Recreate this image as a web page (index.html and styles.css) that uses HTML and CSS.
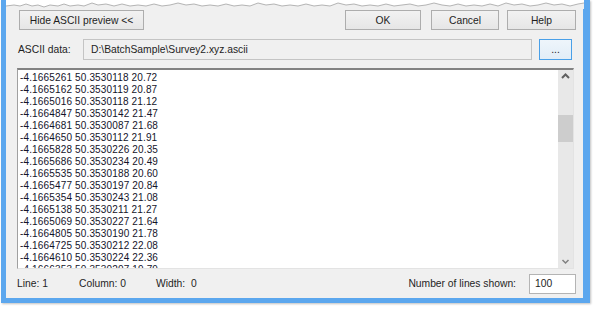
FILE: index.html
```html
<!DOCTYPE html>
<html>
<head>
<meta charset="utf-8">
<link rel="stylesheet" href="styles.css">
</head>
<body>
<div class="window">
  <svg class="tear" width="578" height="9" viewBox="0 0 578 9">
    <path d="M0 6 L8 5 L14 6 L20 4 L26 6 L32 5 L38 7 L44 5 L52 6 L58 4 L64 6 L72 5 L78 6 L86 3 L92 5 L100 4 L108 6 L116 4 L124 6 L132 5 L140 6 L148 4 L156 6 L164 5 L172 3 L180 5 L188 4 L196 6 L204 5 L212 6 L220 4 L228 6 L236 5 L244 6 L252 3 L260 5 L268 4 L276 6 L284 5 L292 6 L300 4 L308 6 L316 5 L324 6 L332 3 L340 5 L348 4 L356 6 L364 5 L372 6 L380 4 L388 6 L396 5 L404 4 L412 6 L420 5 L428 3 L436 5 L444 6 L452 4 L460 6 L468 5 L476 6 L484 4 L492 6 L500 3 L508 5 L516 4 L524 6 L532 5 L540 3 L548 5 L556 4 L564 6 L572 4 L578 3 L578 9 L0 9 Z" fill="#f0f0f0" stroke="none"/>
    <path d="M0 6 L8 5 L14 6 L20 4 L26 6 L32 5 L38 7 L44 5 L52 6 L58 4 L64 6 L72 5 L78 6 L86 3 L92 5 L100 4 L108 6 L116 4 L124 6 L132 5 L140 6 L148 4 L156 6 L164 5 L172 3 L180 5 L188 4 L196 6 L204 5 L212 6 L220 4 L228 6 L236 5 L244 6 L252 3 L260 5 L268 4 L276 6 L284 5 L292 6 L300 4 L308 6 L316 5 L324 6 L332 3 L340 5 L348 4 L356 6 L364 5 L372 6 L380 4 L388 6 L396 5 L404 4 L412 6 L420 5 L428 3 L436 5 L444 6 L452 4 L460 6 L468 5 L476 6 L484 4 L492 6 L500 3 L508 5 L516 4 L524 6 L532 5 L540 3 L548 5 L556 4 L564 6 L572 4 L578 3" fill="none" stroke="#b4b4b4" stroke-width="1"/>
  </svg>
  <div class="content">
    <div class="toprow">
      <button class="btn btn-hide">Hide ASCII preview &lt;&lt;</button>
      <div class="spacer"></div>
      <button class="btn btn-ok">OK</button>
      <button class="btn btn-cancel">Cancel</button>
      <button class="btn btn-help">Help</button>
    </div>
    <div class="datarow">
      <span class="label">ASCII data:</span>
      <div class="field">D:\BatchSample\Survey2.xyz.ascii</div>
      <button class="btn btn-browse">...</button>
    </div>
    <div class="preview">
      <div class="lines">
        <div>-4.1665261 50.3530118 20.72</div>
        <div>-4.1665162 50.3530119 20.87</div>
        <div>-4.1665016 50.3530118 21.12</div>
        <div>-4.1664847 50.3530142 21.47</div>
        <div>-4.1664681 50.3530087 21.68</div>
        <div>-4.1664650 50.3530112 21.91</div>
        <div>-4.1665828 50.3530226 20.35</div>
        <div>-4.1665686 50.3530234 20.49</div>
        <div>-4.1665535 50.3530188 20.60</div>
        <div>-4.1665477 50.3530197 20.84</div>
        <div>-4.1665354 50.3530243 21.08</div>
        <div>-4.1665138 50.3530211 21.27</div>
        <div>-4.1665069 50.3530227 21.64</div>
        <div>-4.1664805 50.3530190 21.78</div>
        <div>-4.1664725 50.3530212 22.08</div>
        <div>-4.1664610 50.3530224 22.36</div>
        <div>-4.1666353 50.3530207 19.79</div>
      </div>
      <div class="scrollbar">
        <svg class="arrow" width="15" height="13" viewBox="0 0 15 13"><path d="M4 8 L7.5 4.5 L11 8" fill="none" stroke="#606060" stroke-width="2"/></svg>
        <div class="track"><div class="thumb"></div></div>
        <svg class="arrow" width="15" height="13" viewBox="0 0 15 13"><path d="M4.5 5 L7.5 8 L10.5 5" fill="none" stroke="#808080" stroke-width="1.5"/></svg>
      </div>
    </div>
    <div class="status">
      <span class="st st-line">Line: 1</span>
      <span class="st st-col">Column: 0</span>
      <span class="st st-width">Width:&nbsp; 0</span>
      <div class="spacer"></div>
      <span class="st">Number of lines shown:</span>
      <div class="numfield">100</div>
    </div>
  </div>
</div>
</body>
</html>
```
FILE: styles.css
```css
html, body {
  margin: 0;
  padding: 0;
  background: #ffffff;
}
body {
  width: 595px;
  height: 312px;
  overflow: hidden;
  font-family: "Liberation Sans", Arial, sans-serif;
  font-size: 10.3px;
  color: #1e1e1e;
}
.window {
  margin-left: 1px;
  width: 577px;
  height: 298px;
  border-left: 5px solid #5ca7ee;
  border-right: 7px solid #5ca7ee;
  border-bottom: 5px solid #5ca7ee;
  background: #f0f0f0;
  display: flex;
  flex-direction: column;
  box-shadow: 1px 1px 2px rgba(0,0,0,0.25);
}
.tear {
  display: block;
  background: #ffffff;
  flex: none;
}
.content {
  padding: 1px 7px 0 11px;
  display: flex;
  flex-direction: column;
}
.toprow {
  display: flex;
  align-items: center;
  height: 20px;
}
.spacer { flex: 1; }
.btn {
  font-family: inherit;
  font-size: 10.3px;
  color: #1e1e1e;
  background: linear-gradient(#f2f2f2, #e6e6e6);
  border: 1px solid #adadad;
  border-radius: 0;
  height: 20px;
  padding: 0;
  margin: 0;
}
.btn-hide { width: 125px; margin-left: 2px; }
.btn-ok { width: 76px; }
.btn-cancel { width: 68px; margin-left: 10px; }
.btn-help { width: 69px; margin-left: 8px; }
.datarow {
  display: flex;
  align-items: center;
  margin-top: 9px;
  height: 21px;
}
.label {
  width: 65px;
  padding-left: 1px;
}
.field {
  width: 440px;
  height: 19px;
  line-height: 19px;
  border: 1px solid #c4c4c4;
  background: #f0f0f0;
  padding-left: 7px;
  box-sizing: content-box;
}
.btn-browse {
  width: 33px;
  height: 21px;
  margin-left: 7px;
  border: 1px solid #4aa0e8;
  background: linear-gradient(#eef5fb, #e2edf7);
  line-height: 14px;
}
.preview {
  margin-top: 8px;
  margin-left: 0;
  width: 557px;
  height: 201px;
  box-sizing: border-box;
  border-top: 2px solid #828282;
  border-left: 1px solid #a0a0a0;
  border-right: 1px solid #e3e3e3;
  border-bottom: 1px solid #e3e3e3;
  background: #ffffff;
  display: flex;
  overflow: hidden;
}
.lines {
  flex: 1;
  padding: 2px 0 0 2px;
  font-size: 10px;
  letter-spacing: 0.15px;
  line-height: 12px;
  color: #14142a;
  overflow: hidden;
  white-space: nowrap;
}
.scrollbar {
  width: 15px;
  background: #e8e8e8;
  display: flex;
  flex-direction: column;
  margin-top: 0;
}
.arrow { display: block; flex: none; }
.track {
  flex: 1;
  padding-top: 32px;
}
.thumb {
  width: 15px;
  height: 27px;
  background: #cdcdcd;
}
.status {
  display: flex;
  align-items: center;
  margin-top: 4px;
  height: 21px;
}
.st { white-space: nowrap; }
.st-line { width: 62px; }
.st-col { width: 77px; }
.numfield {
  width: 40px;
  height: 18px;
  line-height: 18px;
  border: 1px solid #b4b4b4;
  background: #ffffff;
  padding-left: 5px;
  margin-left: 13px;
  margin-right: 0;
}
```
